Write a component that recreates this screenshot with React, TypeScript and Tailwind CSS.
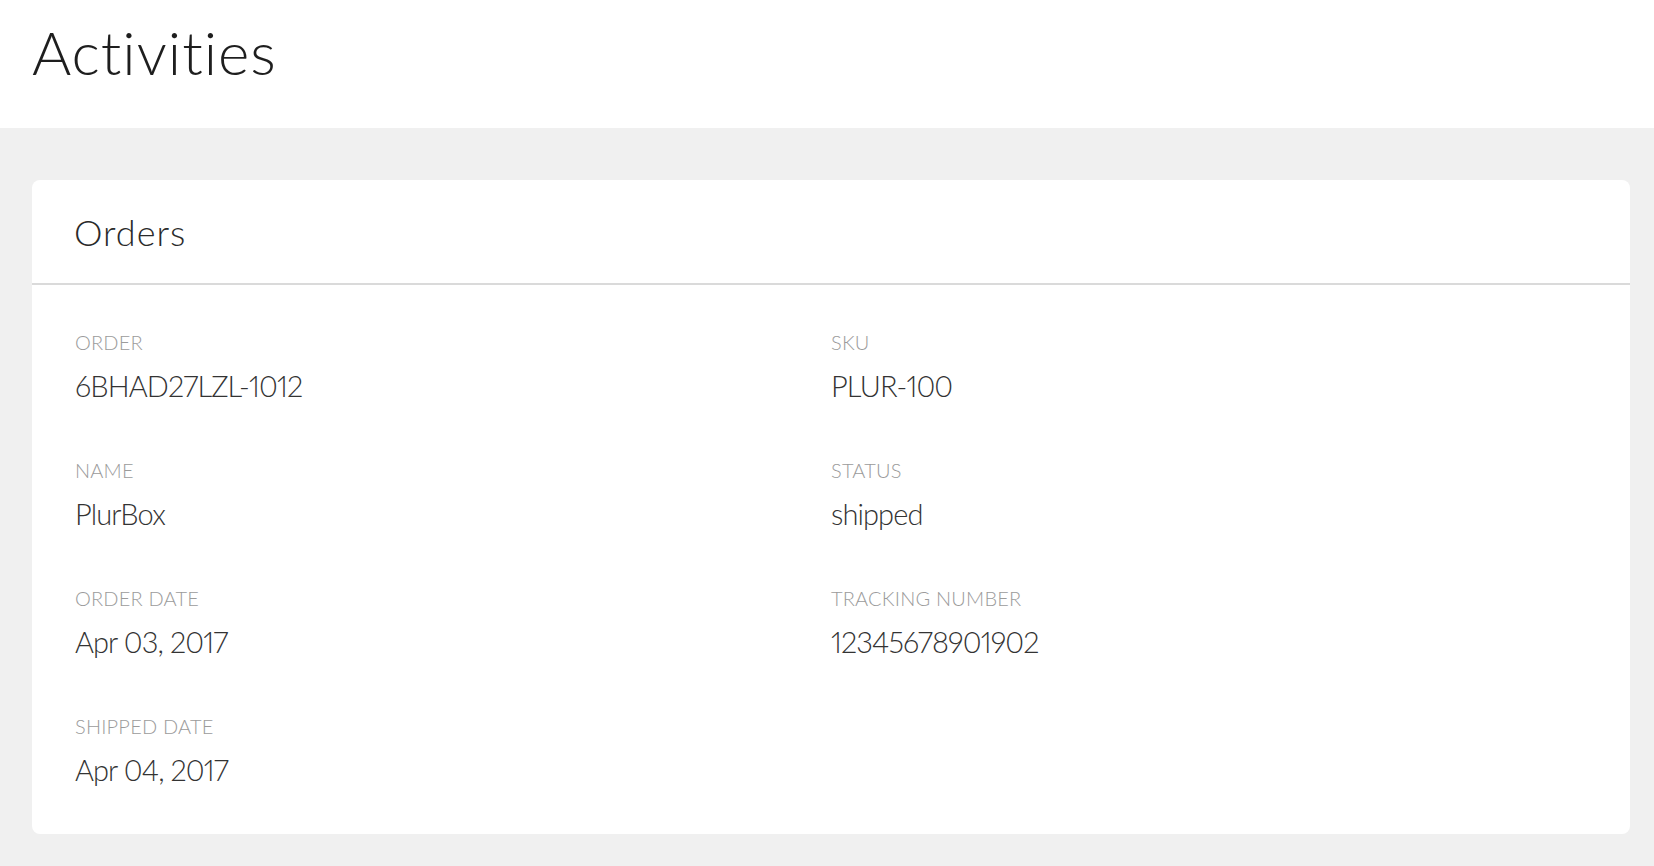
import React from "react";

const fields: [string, string][] = [
  ["ORDER", "6BHAD27LZL-1012"],
  ["SKU", "PLUR-100"],
  ["NAME", "PlurBox"],
  ["STATUS", "shipped"],
  ["ORDER DATE", "Apr 03, 2017"],
  ["TRACKING NUMBER", "12345678901902"],
  ["SHIPPED DATE", "Apr 04, 2017"],
];

export default function App() {
  return (
    <div
      className="min-h-screen bg-[#f0f0f0] font-light"
      style={{ fontFamily: "Lato, 'Noto Sans', sans-serif" }}
    >
      <header className="h-[128px] bg-white pl-[32px] pt-[22px]">
        <h1 className="text-[60px] leading-[60px] font-light tracking-[1px] text-[#1e1e1e]">Activities</h1>
      </header>
      <main className="pl-[32px] pr-[24px] pt-[52px] pb-[33px]">
        <section className="rounded-[8px] bg-white">
          <div className="h-[105px] border-b-2 border-[#dadada] pl-[42px] pt-[34px]">
            <h2 className="text-[36px] leading-[36px] font-light tracking-[1px] text-[#2a2a2a]">Orders</h2>
          </div>
          <div className="grid grid-cols-2 gap-y-[60px] px-[43px] pt-[47px] pb-[50px]">
            {fields.map(([label, value]) => (
              <div key={label} className="flex flex-col">
                <div className="text-[20px] leading-[20px] font-light tracking-[0.2px] text-[#9b9b9b]">{label}</div>
                <div className="mt-[19px] text-[29px] leading-[29px] font-light tracking-[-0.9px] proportional-nums text-[#333333]">
                  {value}
                </div>
              </div>
            ))}
          </div>
        </section>
      </main>
    </div>
  );
}
